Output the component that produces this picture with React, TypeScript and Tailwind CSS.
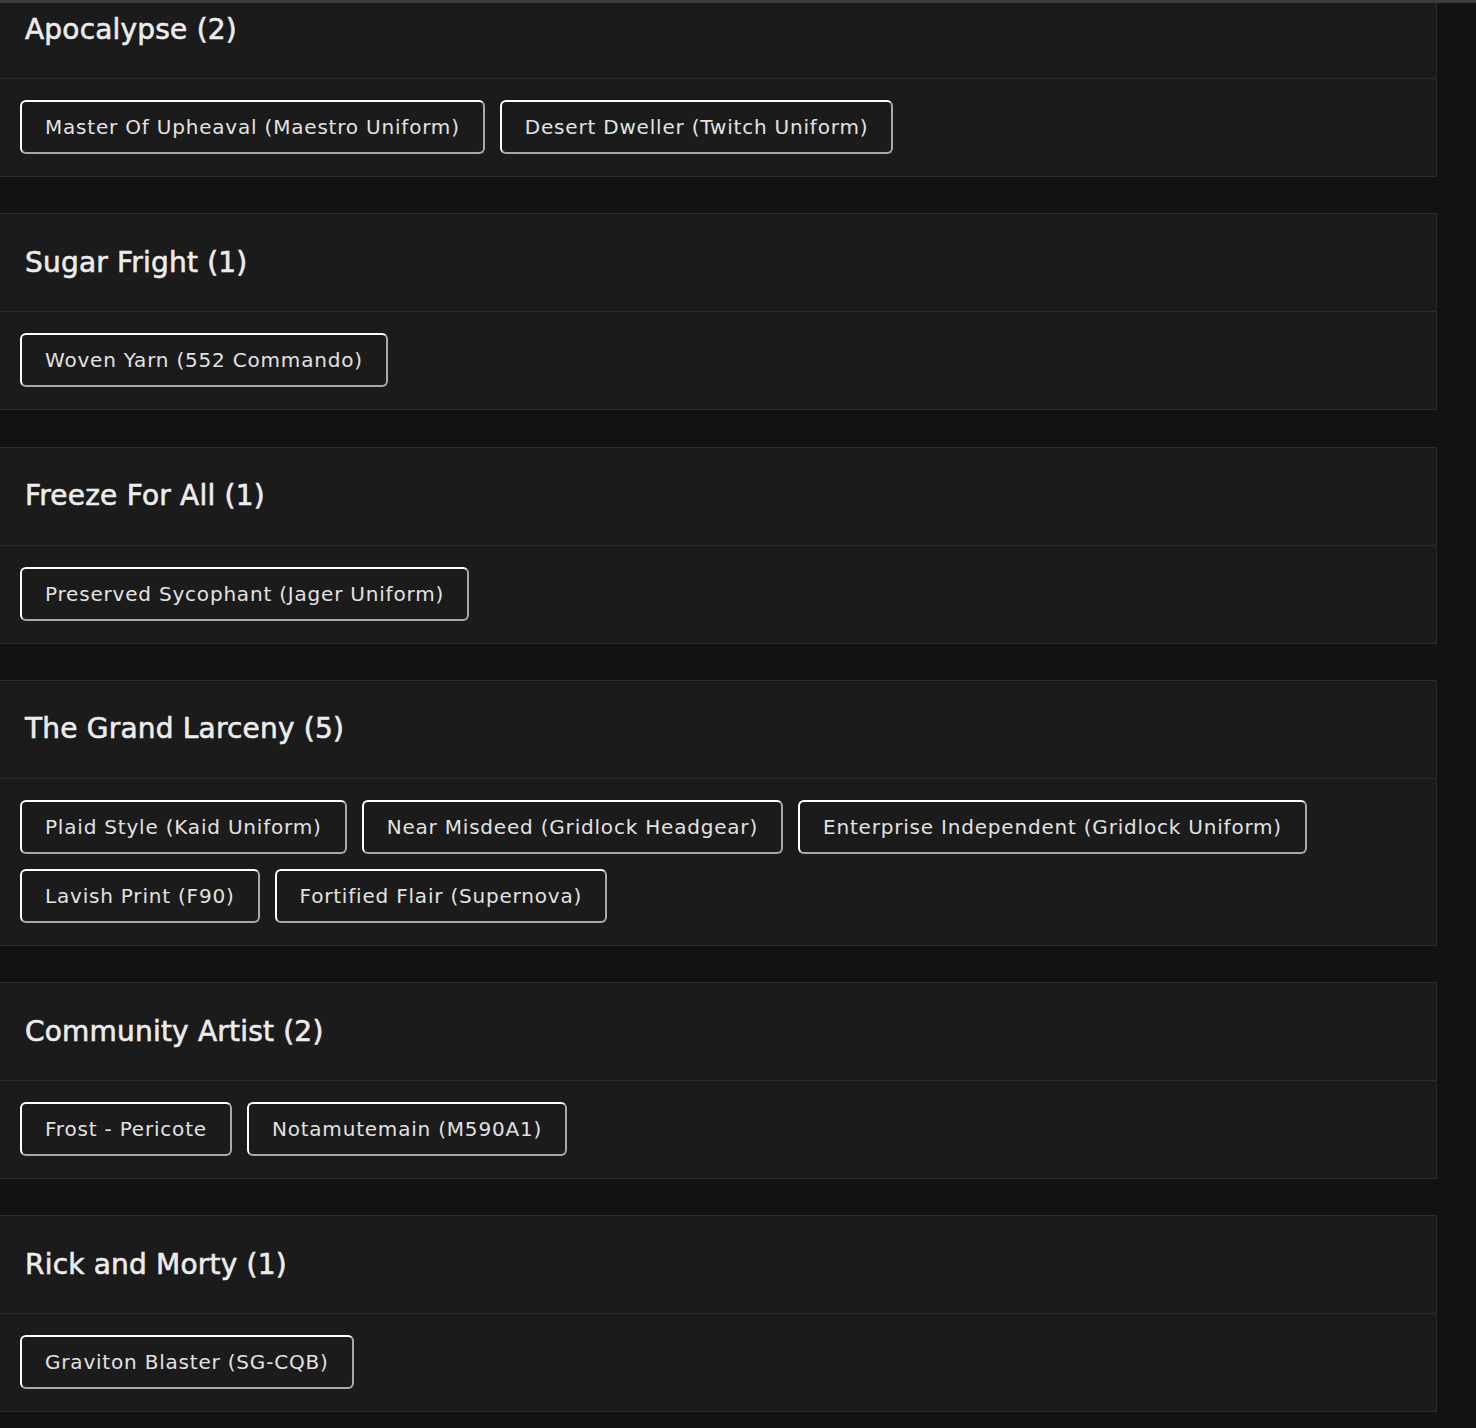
import React from "react";

type Group = { title: string; items: string[] };

const GROUPS: Group[] = [
  { title: "Apocalypse (2)", items: ["Master Of Upheaval (Maestro Uniform)", "Desert Dweller (Twitch Uniform)"] },
  { title: "Sugar Fright (1)", items: ["Woven Yarn (552 Commando)"] },
  { title: "Freeze For All (1)", items: ["Preserved Sycophant (Jager Uniform)"] },
  {
    title: "The Grand Larceny (5)",
    items: [
      "Plaid Style (Kaid Uniform)",
      "Near Misdeed (Gridlock Headgear)",
      "Enterprise Independent (Gridlock Uniform)",
      "Lavish Print (F90)",
      "Fortified Flair (Supernova)",
    ],
  },
  { title: "Community Artist (2)", items: ["Frost - Pericote", "Notamutemain (M590A1)"] },
  { title: "Rick and Morty (1)", items: ["Graviton Blaster (SG-CQB)"] },
];

function Chip({ label }: { label: string }) {
  return (
    <span className="inline-block rounded-[6px] border-2 border-t-white border-l-white border-b-[#a8a8a8] border-r-[#a8a8a8] px-[23px] pt-[13px] pb-[12px] text-[20px] leading-[25px] tracking-[0.8px] text-[#e2e2e2] bg-[#1b1b1b]">
      {label}
    </span>
  );
}

function Card({ group }: { group: Group }) {
  return (
    <section className="border border-l-0 border-[#2c2c2c] bg-[#1b1b1b]">
      <div className="h-[98px] flex items-center px-[25px] border-b border-[#2a2a2a]">
        <h2 className="text-[28px] font-normal text-[#ececec] tracking-[0.2px] [-webkit-text-stroke:0.6px_#ececec]">
          {group.title}
        </h2>
      </div>
      <div className="flex flex-wrap gap-x-[15px] gap-y-[15px] px-[20px] pt-[21px] pb-[22px]">
        {group.items.map((it) => (
          <Chip key={it} label={it} />
        ))}
      </div>
    </section>
  );
}

export default function App() {
  return (
    <div
      className="min-h-screen bg-[#121212] border-t-[3px] border-[#3c3c3c] overflow-hidden"
      style={{ fontFamily: '"DejaVu Sans", "Open Sans", sans-serif' }}
    >
      <div className="w-[1437px] -mt-[23px] flex flex-col gap-[36.3px]">
        {GROUPS.map((g) => (
          <Card key={g.title} group={g} />
        ))}
      </div>
    </div>
  );
}
